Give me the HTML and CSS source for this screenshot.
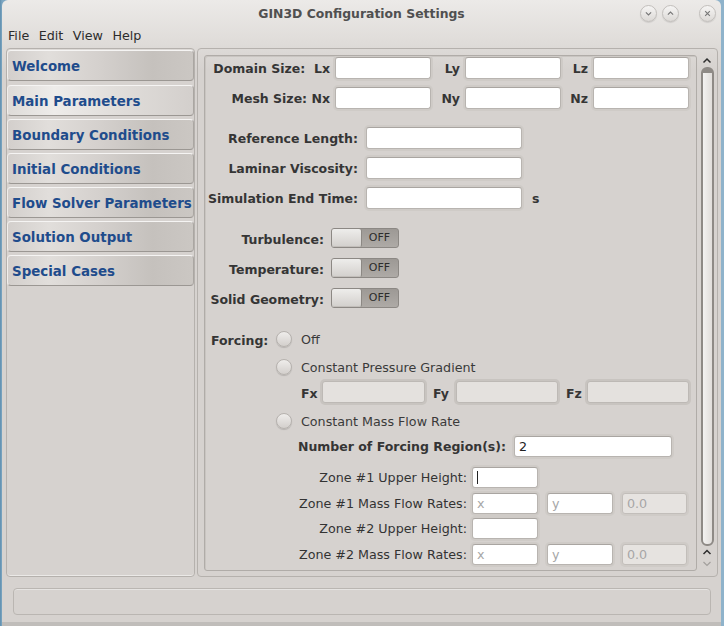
FILE: index.html
```html
<!DOCTYPE html>
<html>
<head>
<meta charset="utf-8">
<title>GIN3D Configuration Settings</title>
<link rel="stylesheet" href="styles.css">
</head>
<body>
<div class="window">
  <header class="titlebar">
    <div></div>
    <div class="title">GIN3D Configuration Settings</div>
    <div class="wm-buttons">
      <span class="wm-btn"><svg viewBox="0 0 16 16"><path d="M5.2 6.8l2.8 2.8l2.8-2.8"/></svg></span>
      <span class="wm-btn"><svg viewBox="0 0 16 16"><path d="M5.2 9.2l2.8-2.8l2.8 2.8"/></svg></span>
      <span class="wm-btn close"><svg viewBox="0 0 16 16"><path d="M5.5 5.5l5 5M10.5 5.5l-5 5"/></svg></span>
    </div>
  </header>
  <nav class="menubar">
    <span>File</span><span>Edit</span><span>View</span><span>Help</span>
  </nav>
  <div class="main">
    <aside class="sidebar">
      <div class="nav-item first">Welcome</div>
      <div class="nav-item active">Main Parameters</div>
      <div class="nav-item">Boundary Conditions</div>
      <div class="nav-item">Initial Conditions</div>
      <div class="nav-item">Flow Solver Parameters</div>
      <div class="nav-item">Solution Output</div>
      <div class="nav-item">Special Cases</div>
    </aside>
    <section class="panel">
      <div class="frame">
        <div class="content">
          <div class="dims">
            <label class="lbl">Domain Size:&nbsp; Lx</label><div class="field"></div>
            <label class="lbl">Ly</label><div class="field"></div>
            <label class="lbl">Lz</label><div class="field"></div>
            <label class="lbl">Mesh Size: Nx</label><div class="field"></div>
            <label class="lbl">Ny</label><div class="field"></div>
            <label class="lbl">Nz</label><div class="field"></div>
          </div>

          <div class="params">
            <label class="lbl">Reference Length:</label><div class="field"></div><span></span>
            <label class="lbl">Laminar Viscosity:</label><div class="field"></div><span></span>
            <label class="lbl">Simulation End Time:</label><div class="field"></div><span class="unit">s</span>
          </div>

          <div class="toggles">
            <label class="lbl">Turbulence:</label>
            <div class="toggle"><span class="knob"></span><span class="off">OFF</span></div>
            <label class="lbl">Temperature:</label>
            <div class="toggle"><span class="knob"></span><span class="off">OFF</span></div>
            <label class="lbl">Solid Geometry:</label>
            <div class="toggle"><span class="knob"></span><span class="off">OFF</span></div>
          </div>

          <div class="forcing">
            <label class="lbl forcing-lbl">Forcing:</label>
            <div class="options">
              <div class="radio-row"><span class="radio"></span><span>Off</span></div>
              <div class="radio-row gap-pg"><span class="radio"></span><span>Constant Pressure Gradient</span></div>
              <div class="fxrow">
                <label class="lbl fx">Fx</label><div class="field disabled"></div>
                <label class="lbl fx pad">Fy</label><div class="field disabled"></div>
                <label class="lbl fx pad">Fz</label><div class="field disabled"></div>
              </div>
              <div class="radio-row gap-mf"><span class="radio"></span><span>Constant Mass Flow Rate</span></div>
            </div>
          </div>

          <div class="regions">
            <label class="lbl">Number of Forcing Region(s):</label>
            <div class="field value">2</div>
          </div>

          <div class="zones">
            <label class="zlbl">Zone #1 Upper Height:</label>
            <div class="field"><span class="caret"></span></div><span></span><span></span>
            <label class="zlbl">Zone #1 Mass Flow Rates:</label>
            <div class="field ph">x</div><div class="field ph">y</div><div class="field dis">0.0</div>
            <label class="zlbl">Zone #2 Upper Height:</label>
            <div class="field"></div><span></span><span></span>
            <label class="zlbl">Zone #2 Mass Flow Rates:</label>
            <div class="field ph">x</div><div class="field ph">y</div><div class="field dis">0.0</div>
          </div>
        </div>
      </div>
      <div class="scrollbar">
        <div class="sb-up"><svg viewBox="0 0 16 12"><path class="dark" d="M4.5 7.5l3.5-3.5l3.5 3.5"/></svg></div>
        <div class="sb-trough"></div>
        <div class="sb-bottom">
          <svg viewBox="0 0 16 12"><path class="dark" d="M4.5 8l3.5-3.5l3.5 3.5"/></svg>
          <svg viewBox="0 0 16 12"><path class="light" d="M4.5 4l3.5 3.5l3.5-3.5"/></svg>
        </div>
      </div>
    </section>
  </div>
  <div class="statusbar"></div>
</div>
</body>
</html>
```

FILE: styles.css
```css
html, body {
  margin: 0;
  padding: 0;
}
body {
  width: 724px;
  height: 626px;
  overflow: hidden;
  background: linear-gradient(90deg, #5e8eae 0, #7ea7c2 2px, #8fb3cb 100%);
  font-family: "DejaVu Sans", "Liberation Sans", sans-serif;
}
.window {
  margin-left: 2px;
  width: 719px;
  height: 626px;
  box-sizing: border-box;
  border-bottom: 4px solid #c0bdba;
  border-radius: 6px 6px 0 0;
  background: linear-gradient(#eceae8 0, #e0ddda 40px, #d6d2cf 70px, #d6d2cf 100%);
  display: flex;
  flex-direction: column;
}

/* title bar */
.titlebar {
  height: 25px;
  box-sizing: border-box;
  padding-top: 2px;
  display: grid;
  grid-template-columns: 1fr auto 1fr;
  align-items: center;
}
.title {
  font-weight: bold;
  font-size: 12.4px;
  color: #505050;
}
.wm-buttons {
  justify-self: end;
  display: flex;
  gap: 5px;
  padding-right: 5px;
}
.wm-btn {
  width: 17px;
  height: 17px;
  box-sizing: border-box;
  border-radius: 50%;
  border: 1px solid #c2bfbc;
  background: linear-gradient(#f6f5f4, #dcd9d6);
  box-shadow: 0 1px 1px rgba(0,0,0,0.1);
  display: flex;
}
.wm-btn.close {
  margin-left: 15px;
}
.wm-btn svg {
  width: 15px;
  height: 15px;
  fill: none;
  stroke: #777;
  stroke-width: 1.2;
}

/* menu bar */
.menubar {
  height: 21px;
  display: flex;
  align-items: center;
  gap: 9.5px;
  padding-left: 6px;
  font-size: 12.7px;
  color: #2c2c2c;
}

/* main area */
.main {
  display: flex;
  height: 531px;
  box-sizing: border-box;
  padding: 2px 3px 0 4px;
  gap: 2px;
}
.sidebar {
  width: 189px;
  box-sizing: border-box;
  border: 1px solid #b5b1ad;
  border-radius: 4px;
  box-shadow: inset 0 -1px 0 #ebe9e7;
  padding-top: 1px;
  display: flex;
  flex-direction: column;
  gap: 3px;
}
.nav-item {
  height: 31px;
  box-sizing: border-box;
  border: 1px solid #aaa6a2;
  border-top-color: #f5f4f3;
  border-left-color: #f0eeec;
  border-bottom-color: #9b9793;
  border-radius: 4px;
  background: linear-gradient(90deg, #d3cfcc 0%, #e1dedb 22%, #d4d0cd 50%, #c5c1bd 78%, #cbc7c3 100%);
  padding-left: 4px;
  line-height: 31px;
  font-weight: bold;
  font-size: 13.4px;
  color: #1f4c8c;
  white-space: nowrap;
}
.nav-item.first {
  margin-bottom: 1px;
}
.nav-item.active {
  background: linear-gradient(90deg, #dedbd8 0%, #eeecea 25%, #e2dfdc 55%, #d3cfcc 100%);
}

.panel {
  flex: 1;
  display: flex;
  box-sizing: border-box;
  border: 1px solid #b5b1ad;
  border-radius: 4px;
  padding: 6px 2px 5px 6px;
  gap: 2px;
}
.frame {
  width: 493px;
  box-sizing: border-box;
  border: 1px solid #b0aca8;
  border-radius: 3px;
  box-shadow: inset 1px 1px 0 #c9c5c1;
  overflow: hidden;
}
.content {
  padding: 1px 0 0 6px;
}

/* labels and fields */
.lbl {
  font-weight: bold;
  font-size: 12.5px;
  color: #353535;
  display: flex;
  align-items: center;
  justify-content: flex-end;
  white-space: nowrap;
}
.field {
  box-sizing: border-box;
  border: 1px solid #b8b4b0;
  border-top-color: #a9a5a1;
  border-radius: 3px;
  background: #ffffff;
  box-shadow: 0 0 0 2px #cfcbc7;
  font-size: 12.7px;
  color: #222;
  display: flex;
  align-items: center;
  padding-left: 4px;
}
.field.disabled {
  background: #e4e1de;
  border-color: #bdb9b5;
  box-shadow: 0 0 0 2px #c8c4c0;
}
.field.ph {
  color: #a6a6a6;
}
.field.dis {
  background: #e6e3e0;
  color: #a6a6a6;
  border-color: #c2beba;
}
.caret {
  width: 1px;
  height: 13px;
  background: #222;
}

.dims {
  display: grid;
  grid-template-columns: 124px 96px 34px 96px 32px 96px;
  grid-auto-rows: 22px;
  row-gap: 8px;
}
.dims .lbl {
  padding-right: 5px;
}

.params {
  margin-top: 18px;
  display: grid;
  grid-template-columns: 155px 156px auto;
  grid-auto-rows: 22px;
  row-gap: 8px;
}
.params .lbl {
  padding-right: 8px;
}
.unit {
  font-weight: bold;
  font-size: 12.5px;
  color: #353535;
  padding-left: 10px;
  display: flex;
  align-items: center;
}

.toggles {
  margin-top: 19px;
  display: grid;
  grid-template-columns: 120px 68px;
  grid-auto-rows: 20px;
  row-gap: 10px;
}
.toggles .lbl {
  padding-right: 7px;
  padding-top: 3px;
}
.toggle {
  display: flex;
  box-sizing: border-box;
  border: 1px solid #8c8884;
  border-radius: 3px;
  background: linear-gradient(#9d9995, #aeaaa6);
}
.knob {
  width: 29px;
  border-radius: 2px;
  background: linear-gradient(#eeedeb, #d2cfcc);
  box-shadow: 1px 0 0 #8c8884, inset 0 -1px 0 #c2beba;
}
.off {
  flex: 1;
  text-align: center;
  font-size: 11px;
  line-height: 18px;
  color: #2c2c2c;
}

.forcing {
  margin-top: 23px;
  display: grid;
  grid-template-columns: 65px 1fr;
}
.forcing-lbl {
  justify-content: flex-start;
  align-items: flex-start;
  height: 16px;
  padding-top: 2px;
}
.options {
  display: flex;
  flex-direction: column;
}
.radio-row {
  display: flex;
  align-items: center;
  gap: 9px;
  height: 16px;
  font-size: 12.7px;
  color: #3a3a3a;
}
.radio-row.gap-pg {
  margin-top: 12px;
}
.radio-row.gap-mf {
  margin-top: 10px;
}
.radio {
  width: 16px;
  height: 16px;
  box-sizing: border-box;
  border-radius: 50%;
  border: 1px solid #b6b2ae;
  background: linear-gradient(#efedeb, #d3cfcc);
  box-shadow: 0 1px 1px rgba(0,0,0,0.15);
}
.fxrow {
  margin-top: 6px;
  padding-left: 25px;
  display: grid;
  grid-template-columns: 21px 103px 31px 102px 29px 102px;
  height: 22px;
}
.lbl.fx {
  justify-content: flex-start;
  padding-top: 3px;
}
.lbl.fx.pad {
  padding-left: 8px;
}

.regions {
  margin-top: 7px;
  display: grid;
  grid-template-columns: 295px 158px;
  column-gap: 8px;
  height: 21px;
}

.zones {
  margin-top: 10px;
  display: grid;
  grid-template-columns: 261px 66px 75px 75px;
  grid-auto-rows: 21px;
  row-gap: 4.7px;
}
.zones .field {
  width: 66px;
  justify-self: end;
}
.zones .field.dis {
  width: 65px;
  margin-right: 1px;
}
.zlbl {
  font-size: 12.7px;
  color: #333;
  display: flex;
  align-items: center;
  justify-content: flex-end;
  padding-right: 5px;
  white-space: nowrap;
}

/* scrollbar */
.scrollbar {
  width: 16px;
  display: flex;
  flex-direction: column;
  align-items: center;
}
.scrollbar svg {
  width: 16px;
  height: 12px;
  fill: none;
  stroke-width: 1.5;
  display: block;
}
.scrollbar .dark {
  stroke: #2e2e2e;
}
.scrollbar .light {
  stroke: #a3a09d;
  stroke-width: 1.2;
}
.sb-up {
  height: 12px;
}
.sb-trough {
  flex: 1;
  width: 13px;
  box-sizing: border-box;
  border: 2px solid #8e8a86;
  border-top-width: 6px;
  border-radius: 6px;
  background: linear-gradient(90deg, #f3f2f1, #e0ddda);
}
.sb-bottom {
  height: 25px;
  display: flex;
  flex-direction: column;
}

/* status bar */
.statusbar {
  margin: 11px 10px 0 11px;
  height: 27px;
  box-sizing: border-box;
  border: 1px solid #bab6b2;
  border-radius: 4px;
  box-shadow: inset 0 1px 0 #e6e4e2;
}
```
